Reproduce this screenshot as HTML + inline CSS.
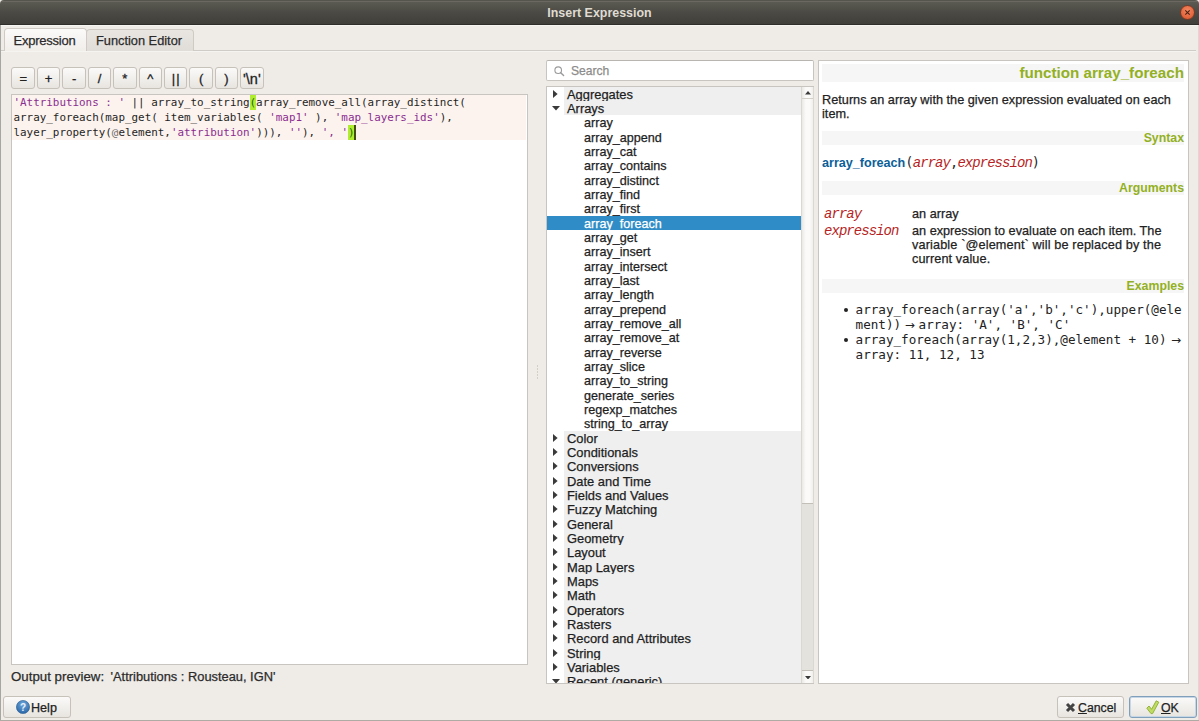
<!DOCTYPE html>
<html lang="en">
<head>
<meta charset="utf-8">
<title>Insert Expression</title>
<style>
*{box-sizing:border-box;margin:0;padding:0}
html,body{width:1199px;height:721px;overflow:hidden;background:#efebe7}
body{position:relative;font-family:"Liberation Sans","DejaVu Sans",sans-serif;font-size:13px;color:#2b2b2b;-webkit-text-stroke:.25px}
.code,.mono,.arg,.band,#title,b{-webkit-text-stroke:0}
.abs{position:absolute}
#titlebar{left:0;top:0;width:1199px;height:25px;background:linear-gradient(#55544d 0,#55544d 1px,#6a6860 1px,#6a6860 2px,#5b5a52 2px,#4b4a44 50%,#403f3a 100%);border-bottom:1px solid #2f2e2a;box-shadow:0 1px 0 #f7f5f2;border-radius:4px 4px 0 0}
#title{left:0;top:1px;width:1199px;height:24px;line-height:24px;text-align:center;color:#dfdbd2;font-weight:bold;font-size:12.45px}
#close{left:1180px;top:5px;width:15px;height:15px;border-radius:50%;background:radial-gradient(circle at 50% 35%,#f08762 0%,#e5673f 60%,#c9512e 100%);border:1px solid #7a3a23}
#wl{left:0;top:25px;width:1px;height:696px;background:#a8a6a1}
#wr{left:1198px;top:25px;width:1px;height:696px;background:#dcd9d4}
#wb{left:0;top:720px;width:1199px;height:1px;background:#aeaba5}
/* tabs */
.tab{top:29px;height:22px;border:1px solid #cfcbc4;border-bottom:none;border-radius:4px 4px 0 0;text-align:center;font-size:13px;line-height:21px;color:#2b2b2b}
#tab1{left:4px;top:28px;width:83px;height:23px;background:linear-gradient(#fbfaf9,#f1eeea);line-height:23px;z-index:2;letter-spacing:-.25px;padding-right:2px}
#tab2{left:86px;width:108px;background:linear-gradient(#e9e6e2,#e0ddd8);line-height:22px;font-size:12.8px;padding-right:2px}
#tabline{left:1px;top:50px;width:1195px;height:1px;background:#cfcbc6;box-shadow:0 1px 0 #f6f4f1}
/* operator buttons */
.op{top:67px;width:23.5px;height:22px;border:1px solid #c6c1b9;-webkit-text-stroke:.3px #222;border-radius:3px;background:linear-gradient(#fbfaf9,#e8e5e0);text-align:center;line-height:20px;padding-top:1px;font-size:13px;color:#222}
/* editor */
#editor{left:11px;top:94px;width:517px;height:571px;background:#fff;border:1px solid #c8c5c0}
#caretbg{left:12px;top:95px;width:514px;height:45px;background:#fcf3ee}
.code{z-index:3;left:13.5px;font-family:"DejaVu Sans Mono","Liberation Mono",monospace;font-size:10.9px;line-height:15px;height:15px;white-space:pre;color:#1f1f1f}
.s{color:#8b2d90}
.hl{color:#1d661d}
.hlb{background:#b0ec30;width:6.4px;height:15px}
.at{color:#6e6e6e}
#outprev{left:11px;top:669px;height:16px;line-height:16px;white-space:pre;color:#2b2b2b}
/* buttons */
.btn{top:696px;height:22px;border:1px solid #c6c1b9;border-radius:3px;background:linear-gradient(#fbfaf9,#e8e5e0);line-height:20px;color:#222;white-space:pre}
/* search */
#search{left:546px;top:60px;width:268px;height:21px;background:#fff;border:1px solid #c8c5c0;border-top-color:#b8b5b0;border-radius:2px}
#search span{left:24px;top:1px;line-height:19px;color:#8c8c8c;font-size:12.1px}
/* tree */
#tree{left:546px;top:86px;width:268px;height:598px;background:#fff;border:1px solid #c8c5c0;overflow:hidden}
#treein{left:547px;top:87px;width:254px;height:596px;overflow:hidden}
.row{left:0;width:254px;height:14.33px;line-height:14.33px;white-space:pre;color:#1e1e1e}
.row .gbg{left:17px;top:0;width:237px;height:14.4px;background:#efefef}
.row .gt{left:20px;top:1px;font-size:12.9px}
.row .it{left:37px;top:1px;font-size:12.6px}
.row.sel{background:#308cc6;color:#fff}
#sb{left:801px;top:87px;width:13px;height:596px;background:linear-gradient(to right,#ebe9e5,#fbfaf9 35%,#fbfaf9 70%,#f1efeb);border-left:1px solid #dbd8d3;border-right:1px solid #dbd8d3}
#sbh{left:802px;top:503px;width:11px;height:168px;background:#e4e2dd;border-top:1px solid #c2bfb9;border-bottom:1px solid #c2bfb9}
/* help panel */
#help{left:818px;top:60px;width:371px;height:624px;background:#fff;border:1px solid #c8c5c0}
.band{left:822px;width:362px;background:#f6f6f6;color:#93b023;font-weight:bold;font-size:12.3px;text-align:right;white-space:pre}
.txt{white-space:pre;color:#222}
.ar{display:inline-block;width:19px;text-align:center;font-family:"DejaVu Sans",sans-serif;font-size:12px;line-height:10px}
.mono{font-family:"DejaVu Sans Mono","Liberation Mono",monospace}
.arg{font-size:14px;letter-spacing:-.96px;font-family:"Liberation Mono","DejaVu Sans Mono",monospace;font-style:italic;color:#b71f24}
</style>
</head>
<body>
<div id="titlebar" class="abs"></div>
<div id="title" class="abs">Insert Expression</div>
<div id="close" class="abs"><svg width="13" height="13" viewBox="0 0 13 13" style="position:absolute;left:0;top:0"><path d="M4.3 4.3 L8.7 8.7 M8.7 4.3 L4.3 8.7" stroke="#4a2214" stroke-width="1.1" fill="none"/></svg></div>
<div id="wl" class="abs"></div><div id="wr" class="abs"></div><div id="wb" class="abs"></div>

<div id="tabline" class="abs"></div>
<div id="tab1" class="abs tab">Expression</div>
<div id="tab2" class="abs tab">Function Editor</div>

<div class="abs op" style="left:11.5px;left:11px;width:24.4px">=</div>
<div class="abs op" style="left:36.9px">+</div>
<div class="abs op" style="left:62.3px">-</div>
<div class="abs op" style="left:87.7px">/</div>
<div class="abs op" style="left:113.1px">*</div>
<div class="abs op" style="left:138.5px">^</div>
<div class="abs op" style="left:163.9px;letter-spacing:1px;text-indent:1px">||</div>
<div class="abs op" style="left:189.3px">(</div>
<div class="abs op" style="left:214.7px">)</div>
<div class="abs op" style="left:240.1px;font-size:14.5px">'\n'</div>

<div id="editor" class="abs"></div>
<div id="caretbg" class="abs"></div>
<div class="abs code" style="top:95px"><span class="s">'Attributions : '</span> || array_to_string<span class="hl">(</span>array_remove_all(array_distinct(</div>
<div class="abs code" style="top:110px">array_foreach(map_get( item_variables( <span class="s">'map1'</span> ), <span class="s">'map_layers_ids'</span>),</div>
<div class="abs code" style="top:125px">layer_property(<span class="at">@</span>element,<span class="s">'attribution'</span>))), <span class="s">''</span>), <span class="s">', '</span><span class="hl">)</span></div>
<div class="abs hlb" style="left:249.5px;top:95px"></div><div class="abs hlb" style="left:347.9px;top:125px"></div>
<div class="abs" style="left:354.3px;top:125px;width:1.7px;height:15px;background:#434d10"></div>

<div class="abs" style="left:536.5px;top:365px;width:1.5px;height:1.5px;background:#d3cfc9;box-shadow:0 3px 0 #d3cfc9,0 6px 0 #d3cfc9,0 9px 0 #d3cfc9,0 12px 0 #d3cfc9"></div>
<div id="outprev" class="abs" style="font-size:13.3px">Output preview:</div>
<div id="outprev2" class="abs" style="left:110.6px;top:669px;height:16px;line-height:16px;white-space:pre;font-size:12.85px">'Attributions : Rousteau, IGN'</div>

<div class="abs btn" style="left:3px;width:68px"><svg class="abs" style="left:12px;top:3px" width="14" height="14" viewBox="0 0 14 14"><defs><radialGradient id="hg" cx="50%" cy="30%" r="70%"><stop offset="0" stop-color="#6fa8dc"/><stop offset="1" stop-color="#2a66a8"/></radialGradient></defs><circle cx="7" cy="7" r="6.6" fill="url(#hg)" stroke="#2c5f96" stroke-width=".6"/><text x="7" y="10.6" text-anchor="middle" font-family="Liberation Sans" font-weight="bold" font-size="10" fill="#e8f1fb">?</text></svg><span class="abs" style="left:27px;top:1px;font-size:12.6px">Help</span></div>

<div class="abs btn" style="left:1057px;width:67px"><svg class="abs" style="left:7px;top:5px" width="11" height="11" viewBox="0 0 11 11"><path d="M2 2L9 9M9 2L2 9" stroke="#444" stroke-width="3" fill="none"/></svg><span class="abs" style="left:20px;top:1px;font-size:12.3px"><u>C</u>ancel</span></div>
<div class="abs btn" style="left:1129px;width:68px;border-color:#7f9fbb;box-shadow:inset 0 0 0 1px #c5d6e6"><svg class="abs" style="left:16px;top:3px" width="14" height="15" viewBox="0 0 14 15"><path d="M0.8 8.2L3 6L5.6 9.3L10.2 0.8L12.8 2.2L6.6 13.6L5 13.6Z" fill="#bfdc63" stroke="#8dac2f" stroke-width=".9" stroke-linejoin="round"/></svg><span class="abs" style="left:31px;top:1px;font-size:12.3px"><u>O</u>K</span></div>

<div id="search" class="abs"><svg class="abs" style="left:7px;top:5px" width="12" height="12" viewBox="0 0 12 12"><circle cx="4.2" cy="4.2" r="3.3" stroke="#9a9a9a" stroke-width="1.1" fill="none"/><path d="M6.7 6.7L9.6 9.6" stroke="#9a9a9a" stroke-width="1.4" stroke-linecap="round"/></svg><span class="abs">Search</span></div>

<div id="tree" class="abs"></div>
<div id="treein" class="abs">
<div class="abs row" style="top:-0.3px"><svg class="abs" style="left:6px;top:3px" width="5" height="8" viewBox="0 0 5 8"><path d="M0 0V8L4.6 4Z" fill="#3a3a3a"/></svg><div class="abs gbg"></div><span class="abs gt">Aggregates</span></div>
<div class="abs row" style="top:14.03px"><svg class="abs" style="left:5px;top:5px" width="8" height="5" viewBox="0 0 8 5"><path d="M0 0H8L4 4.6Z" fill="#3a3a3a"/></svg><div class="abs gbg"></div><span class="abs gt">Arrays</span></div>
<div class="abs row" style="top:28.36px"><span class="abs it">array</span></div>
<div class="abs row" style="top:42.69px"><span class="abs it">array_append</span></div>
<div class="abs row" style="top:57.02px"><span class="abs it">array_cat</span></div>
<div class="abs row" style="top:71.35px"><span class="abs it">array_contains</span></div>
<div class="abs row" style="top:85.68px"><span class="abs it">array_distinct</span></div>
<div class="abs row" style="top:100.01px"><span class="abs it">array_find</span></div>
<div class="abs row" style="top:114.34px"><span class="abs it">array_first</span></div>
<div class="abs row sel" style="top:128.67px"><span class="abs it">array_foreach</span></div>
<div class="abs row" style="top:143.0px"><span class="abs it">array_get</span></div>
<div class="abs row" style="top:157.33px"><span class="abs it">array_insert</span></div>
<div class="abs row" style="top:171.66px"><span class="abs it">array_intersect</span></div>
<div class="abs row" style="top:185.99px"><span class="abs it">array_last</span></div>
<div class="abs row" style="top:200.32px"><span class="abs it">array_length</span></div>
<div class="abs row" style="top:214.65px"><span class="abs it">array_prepend</span></div>
<div class="abs row" style="top:228.98px"><span class="abs it">array_remove_all</span></div>
<div class="abs row" style="top:243.31px"><span class="abs it">array_remove_at</span></div>
<div class="abs row" style="top:257.64px"><span class="abs it">array_reverse</span></div>
<div class="abs row" style="top:271.97px"><span class="abs it">array_slice</span></div>
<div class="abs row" style="top:286.3px"><span class="abs it">array_to_string</span></div>
<div class="abs row" style="top:300.63px"><span class="abs it">generate_series</span></div>
<div class="abs row" style="top:314.96px"><span class="abs it">regexp_matches</span></div>
<div class="abs row" style="top:329.29px"><span class="abs it">string_to_array</span></div>
<div class="abs row" style="top:343.62px"><svg class="abs" style="left:6px;top:3px" width="5" height="8" viewBox="0 0 5 8"><path d="M0 0V8L4.6 4Z" fill="#3a3a3a"/></svg><div class="abs gbg"></div><span class="abs gt">Color</span></div>
<div class="abs row" style="top:357.95px"><svg class="abs" style="left:6px;top:3px" width="5" height="8" viewBox="0 0 5 8"><path d="M0 0V8L4.6 4Z" fill="#3a3a3a"/></svg><div class="abs gbg"></div><span class="abs gt">Conditionals</span></div>
<div class="abs row" style="top:372.28px"><svg class="abs" style="left:6px;top:3px" width="5" height="8" viewBox="0 0 5 8"><path d="M0 0V8L4.6 4Z" fill="#3a3a3a"/></svg><div class="abs gbg"></div><span class="abs gt">Conversions</span></div>
<div class="abs row" style="top:386.61px"><svg class="abs" style="left:6px;top:3px" width="5" height="8" viewBox="0 0 5 8"><path d="M0 0V8L4.6 4Z" fill="#3a3a3a"/></svg><div class="abs gbg"></div><span class="abs gt">Date and Time</span></div>
<div class="abs row" style="top:400.94px"><svg class="abs" style="left:6px;top:3px" width="5" height="8" viewBox="0 0 5 8"><path d="M0 0V8L4.6 4Z" fill="#3a3a3a"/></svg><div class="abs gbg"></div><span class="abs gt">Fields and Values</span></div>
<div class="abs row" style="top:415.27px"><svg class="abs" style="left:6px;top:3px" width="5" height="8" viewBox="0 0 5 8"><path d="M0 0V8L4.6 4Z" fill="#3a3a3a"/></svg><div class="abs gbg"></div><span class="abs gt">Fuzzy Matching</span></div>
<div class="abs row" style="top:429.6px"><svg class="abs" style="left:6px;top:3px" width="5" height="8" viewBox="0 0 5 8"><path d="M0 0V8L4.6 4Z" fill="#3a3a3a"/></svg><div class="abs gbg"></div><span class="abs gt">General</span></div>
<div class="abs row" style="top:443.93px"><svg class="abs" style="left:6px;top:3px" width="5" height="8" viewBox="0 0 5 8"><path d="M0 0V8L4.6 4Z" fill="#3a3a3a"/></svg><div class="abs gbg"></div><span class="abs gt">Geometry</span></div>
<div class="abs row" style="top:458.26px"><svg class="abs" style="left:6px;top:3px" width="5" height="8" viewBox="0 0 5 8"><path d="M0 0V8L4.6 4Z" fill="#3a3a3a"/></svg><div class="abs gbg"></div><span class="abs gt">Layout</span></div>
<div class="abs row" style="top:472.59px"><svg class="abs" style="left:6px;top:3px" width="5" height="8" viewBox="0 0 5 8"><path d="M0 0V8L4.6 4Z" fill="#3a3a3a"/></svg><div class="abs gbg"></div><span class="abs gt">Map Layers</span></div>
<div class="abs row" style="top:486.92px"><svg class="abs" style="left:6px;top:3px" width="5" height="8" viewBox="0 0 5 8"><path d="M0 0V8L4.6 4Z" fill="#3a3a3a"/></svg><div class="abs gbg"></div><span class="abs gt">Maps</span></div>
<div class="abs row" style="top:501.25px"><svg class="abs" style="left:6px;top:3px" width="5" height="8" viewBox="0 0 5 8"><path d="M0 0V8L4.6 4Z" fill="#3a3a3a"/></svg><div class="abs gbg"></div><span class="abs gt">Math</span></div>
<div class="abs row" style="top:515.58px"><svg class="abs" style="left:6px;top:3px" width="5" height="8" viewBox="0 0 5 8"><path d="M0 0V8L4.6 4Z" fill="#3a3a3a"/></svg><div class="abs gbg"></div><span class="abs gt">Operators</span></div>
<div class="abs row" style="top:529.91px"><svg class="abs" style="left:6px;top:3px" width="5" height="8" viewBox="0 0 5 8"><path d="M0 0V8L4.6 4Z" fill="#3a3a3a"/></svg><div class="abs gbg"></div><span class="abs gt">Rasters</span></div>
<div class="abs row" style="top:544.24px"><svg class="abs" style="left:6px;top:3px" width="5" height="8" viewBox="0 0 5 8"><path d="M0 0V8L4.6 4Z" fill="#3a3a3a"/></svg><div class="abs gbg"></div><span class="abs gt">Record and Attributes</span></div>
<div class="abs row" style="top:558.57px"><svg class="abs" style="left:6px;top:3px" width="5" height="8" viewBox="0 0 5 8"><path d="M0 0V8L4.6 4Z" fill="#3a3a3a"/></svg><div class="abs gbg"></div><span class="abs gt">String</span></div>
<div class="abs row" style="top:572.9px"><svg class="abs" style="left:6px;top:3px" width="5" height="8" viewBox="0 0 5 8"><path d="M0 0V8L4.6 4Z" fill="#3a3a3a"/></svg><div class="abs gbg"></div><span class="abs gt">Variables</span></div>
<div class="abs row" style="top:587.23px"><svg class="abs" style="left:5px;top:5px" width="8" height="5" viewBox="0 0 8 5"><path d="M0 0H8L4 4.6Z" fill="#3a3a3a"/></svg><div class="abs gbg"></div><span class="abs gt">Recent (generic)</span></div>
</div>
<div id="sb" class="abs"></div>
<div id="sbh" class="abs"></div>
<svg class="abs" style="left:804.5px;top:91px" width="6" height="3.5" viewBox="0 0 6 3.5"><path d="M0 3.5H6L3 0Z" fill="#3a3a3a"/></svg>
<svg class="abs" style="left:804.5px;top:675.5px" width="6" height="3.5" viewBox="0 0 6 3.5"><path d="M0 0H6L3 3.5Z" fill="#3a3a3a"/></svg>
<div class="abs" style="left:802px;top:98px;width:11px;height:1px;background:#d3d0ca"></div>

<div id="help" class="abs"></div>
<div class="abs band" style="top:64px;height:18px;line-height:18px;font-size:15.2px">function array_foreach</div>
<div class="abs txt" style="left:822px;top:93px;line-height:14.2px;font-size:12.7px;letter-spacing:.02px">Returns an array with the given expression evaluated on each
item.</div>
<div class="abs band" style="top:131px;height:14px;line-height:14px">Syntax</div>
<div class="abs txt" style="left:822px;top:154px;line-height:17px"><b style="color:#0a6099;font-size:12.6px">array_foreach</b><span class="mono" style="color:#2a2a2a;font-size:13.6px;letter-spacing:-.75px">(</span><span class="arg">array</span><span class="mono" style="color:#2a2a2a;font-size:13.6px;letter-spacing:-.75px">,</span><span class="arg">expression</span><span class="mono" style="color:#2a2a2a;font-size:13.6px;letter-spacing:-.75px">)</span></div>
<div class="abs band" style="top:181px;height:14px;line-height:14px">Arguments</div>
<div class="abs arg" style="left:824px;top:206px;line-height:16px">array</div>
<div class="abs txt" style="left:912px;top:206px;line-height:16px;font-size:12.7px">an array</div>
<div class="abs arg" style="left:824px;top:223px;line-height:16px">expression</div>
<div class="abs txt" style="left:912px;top:223.8px;line-height:14.25px;font-size:12.7px">an expression to evaluate on each item. The
<span style="letter-spacing:.13px">variable `@element` will be replaced by the</span>
<span style="letter-spacing:.1px">current value.</span></div>
<div class="abs band" style="top:279px;height:14px;line-height:14px">Examples</div>
<div class="abs" style="left:843.8px;top:307.6px;width:4.6px;height:4.6px;border-radius:50%;background:#222"></div>
<div class="abs" style="left:843.8px;top:337.8px;width:4.6px;height:4.6px;border-radius:50%;background:#222"></div>
<div class="abs txt mono" style="left:855.6px;top:302px;line-height:15.1px;font-size:12.6px">array_foreach(array('a','b','c'),upper(@ele
ment))<span class="ar" style="width:17.5px">→</span>array: 'A', 'B', 'C'
array_foreach(array(1,2,3),@element + 10)<span class="ar">→</span>
array: 11, 12, 13</div>
</body>
</html>
